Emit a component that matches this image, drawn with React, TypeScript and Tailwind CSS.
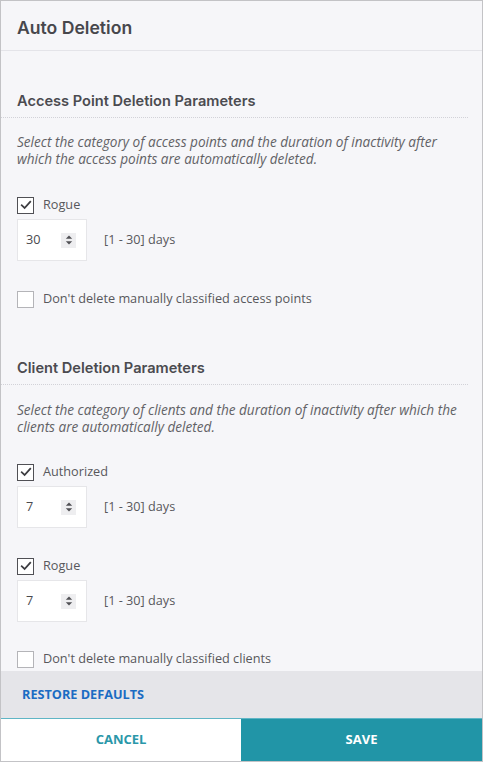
import { useState } from "react";

const body = { fontFamily: '"Open Sans", "Liberation Sans", sans-serif' };
const head = { fontFamily: 'Inter, "Open Sans", sans-serif' };

function Check({ checked, onToggle, label }: { checked: boolean; onToggle: () => void; label: string }) {
  return (
    <label className="flex h-5 cursor-pointer items-center gap-[9px]" onClick={onToggle}>
      <span
        className={
          checked
            ? "flex h-[17px] w-[17px] items-center justify-center border-[1.5px] border-[#505055] bg-white"
            : "flex h-[17px] w-[17px] items-center justify-center border-[1.5px] border-[#b4b4b8] bg-white"
        }
      >
        {checked && (
          <svg width="12" height="12" viewBox="0 0 12 12" fill="none">
            <path d="M1.8 6.3 L4.6 9 L10.2 2.8" stroke="#3c3c40" strokeWidth="1.8" strokeLinecap="square" />
          </svg>
        )}
      </span>
      <span className="text-[12.7px] text-[#58585c]">{label}</span>
    </label>
  );
}

function DaysInput({ value }: { value: number }) {
  return (
    <div className="mt-1 flex items-center">
      <div className="flex h-[42px] w-[70px] items-center justify-between border border-[#e6e6e9] bg-white pl-2 pr-[10px]">
        <span className="text-[12.7px] text-[#4a4a4e]">{value}</span>
        <span className="flex h-[15px] w-[15px] items-center justify-center bg-[#eeeef0]">
          <svg width="8" height="12" viewBox="0 0 8 12">
            <path d="M0.8 4.8 L4 1.4 L7.2 4.8 Z" fill="#505055" />
            <path d="M0.8 7.2 L4 10.6 L7.2 7.2 Z" fill="#505055" />
          </svg>
        </span>
      </div>
      <span className="ml-[17px] text-[12.7px] text-[#58585c]">[1 - 30] days</span>
    </div>
  );
}

function SectionTitle({ children }: { children: string }) {
  return (
    <div className="mr-[14px] border-b border-dotted border-[#d2d2d8] pb-[6px] pl-4">
      <h2 style={head} className="text-[14.6px] font-semibold leading-5 text-[#4b4b50]">
        {children}
      </h2>
    </div>
  );
}

export default function App() {
  const [apRogue, setApRogue] = useState(true);
  const [apKeep, setApKeep] = useState(false);
  const [cAuth, setCAuth] = useState(true);
  const [cRogue, setCRogue] = useState(true);
  const [cKeep, setCKeep] = useState(false);

  return (
    <div style={body} className="flex h-[762px] w-[483px] flex-col border border-[#c3c3c6] bg-[#f6f6f9]">
      <div className="flex h-[50px] shrink-0 items-center border-b border-[#e4e4e9] pl-4 pt-[5px]">
        <h1 style={head} className="text-[17.6px] font-semibold text-[#47474c]">
          Auto Deletion
        </h1>
      </div>

      <div className="flex-1 overflow-hidden pt-10">
        <SectionTitle>Access Point Deletion Parameters</SectionTitle>
        <p className="mt-[15px] pl-4 pr-5 text-[13.6px] italic leading-[17px] text-[#626266]">
          Select the category of access points and the duration of inactivity after which the access points are
          automatically deleted.
        </p>
        <div className="mt-[28px] pl-4">
          <Check checked={apRogue} onToggle={() => setApRogue(!apRogue)} label="Rogue" />
          <DaysInput value={30} />
          <div className="mt-[28px]">
            <Check checked={apKeep} onToggle={() => setApKeep(!apKeep)} label="Don't delete manually classified access points" />
          </div>
        </div>

        <div className="mt-[49px]">
          <SectionTitle>Client Deletion Parameters</SectionTitle>
        </div>
        <p className="mt-[16px] pl-4 pr-5 text-[13.6px] italic leading-[17px] text-[#626266]">
          Select the category of clients and the duration of inactivity after which the clients are automatically
          deleted.
        </p>
        <div className="mt-[27px] pl-4">
          <Check checked={cAuth} onToggle={() => setCAuth(!cAuth)} label="Authorized" />
          <DaysInput value={7} />
          <div className="mt-[28px]">
            <Check checked={cRogue} onToggle={() => setCRogue(!cRogue)} label="Rogue" />
          </div>
          <DaysInput value={7} />
          <div className="mt-[27px]">
            <Check checked={cKeep} onToggle={() => setCKeep(!cKeep)} label="Don't delete manually classified clients" />
          </div>
        </div>
      </div>

      <div className="flex h-[47px] shrink-0 items-center bg-[#e5e5e9] pl-[21px]">
        <button className="text-[12.7px] font-bold text-[#1b6cc3]">RESTORE DEFAULTS</button>
      </div>

      <div className="flex h-[43px] shrink-0 border-t border-[#5fb5c5]">
        <button className="flex w-[240px] items-center justify-center bg-white text-[13px] font-bold text-[#2a97a9]">
          CANCEL
        </button>
        <button className="flex flex-1 items-center justify-center bg-[#2195a7] text-[13px] font-bold text-white">
          SAVE
        </button>
      </div>
    </div>
  );
}
